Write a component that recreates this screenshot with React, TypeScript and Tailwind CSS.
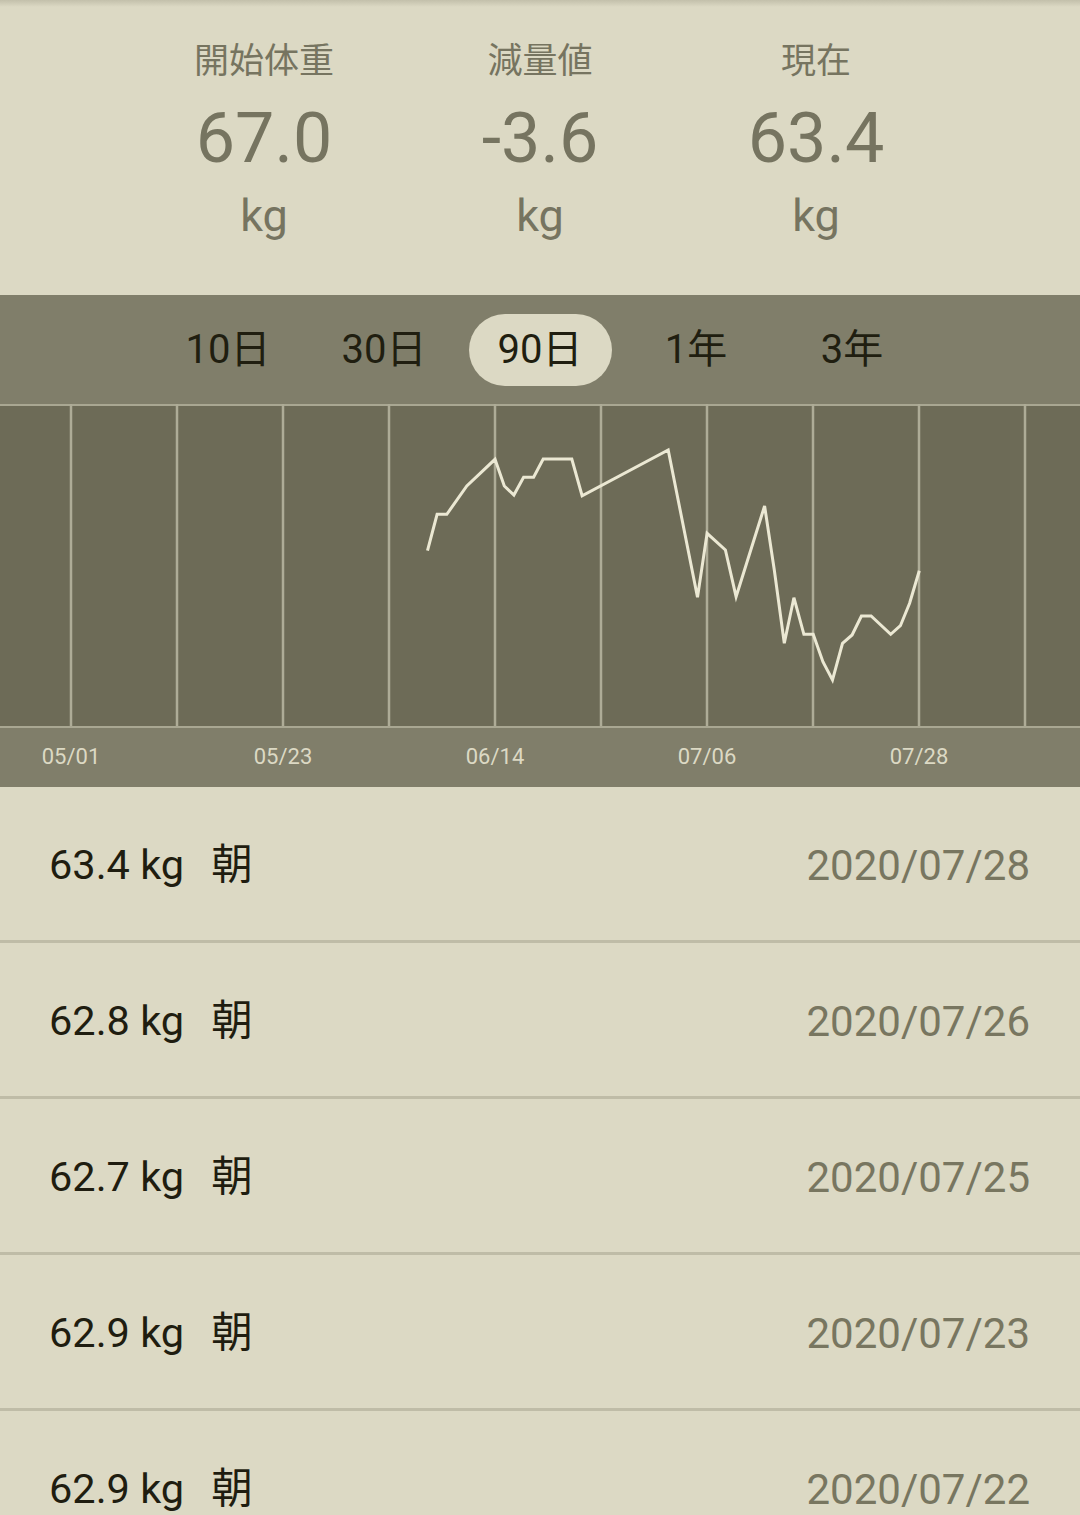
import React from 'react'

const FONT = { fontFamily: "Roboto, 'Noto Sans CJK JP', sans-serif" }

const stats = [
  { label: '開始体重', value: '67.0' },
  { label: '減量値', value: '-3.6' },
  { label: '現在', value: '63.4' },
]

const tabs = ['10日', '30日', '90日', '1年', '3年']

const axis = ['05/01', '', '05/23', '', '06/14', '', '07/06', '', '07/28', '']

const rows = [
  { w: '63.4', d: '2020/07/28' },
  { w: '62.8', d: '2020/07/26' },
  { w: '62.7', d: '2020/07/25' },
  { w: '62.9', d: '2020/07/23' },
  { w: '62.9', d: '2020/07/22' },
]

// chart points, page coords (y offset 404 removed below)
const pts: [number, number][] = [
  [427.5, 550.7], [437.1, 514.3], [446.8, 514.3], [466.8, 486], [495, 459.3],
  [504.3, 486], [513.9, 495], [523.6, 477.3], [533.6, 477.3], [543.2, 459],
  [571.8, 459], [582.1, 495.7], [668.2, 450], [697.5, 597.3], [707.1, 533.3],
  [725.4, 550], [736.1, 596.7], [764.6, 506], [774.3, 570], [784.3, 643.3],
  [793.9, 597.7], [803.9, 634.3], [813.2, 634.3], [822.9, 661.7], [832.5, 680],
  [842.5, 643.3], [852.1, 635], [861.4, 616], [871.1, 616], [890.7, 634.3],
  [900.4, 625.7], [909.6, 603.3], [919.3, 570.7],
]

const gridX = [71, 177, 283, 389, 495, 601, 707, 813, 919, 1025]

function Chart() {
  const line = pts.map(([x, y]) => `${x},${(y - 404).toFixed(1)}`).join(' ')
  return (
    <svg width="1080" height="324" viewBox="0 0 1080 324" className="block bg-[#6d6b57]">
      <line x1="0" y1="1" x2="1080" y2="1" stroke="#a9a792" strokeWidth="2" />
      {gridX.map((x) => (
        <line key={x} x1={x} y1="0" x2={x} y2="324" stroke="#aeac97" strokeWidth="2.5" />
      ))}
      <line x1="0" y1="323" x2="1080" y2="323" stroke="#a9a792" strokeWidth="2" />
      <polyline points={line} fill="none" stroke="#ebe8d3" strokeWidth="3" strokeLinejoin="miter" />
    </svg>
  )
}

export default function App() {
  return (
    <div className="h-[1515px] w-[1080px] overflow-hidden bg-[#dcd9c4]" style={FONT}>
      {/* summary header */}
      <header className="relative h-[295px] flex justify-center">
        <div className="absolute inset-x-0 top-0 h-[7px] bg-gradient-to-b from-[#c3c0ab] to-[#dcd9c4]" />
        {stats.map((s) => (
          <div key={s.label} className="w-[276px] flex flex-col items-center pt-[42px] text-[#767460]">
            <p className="text-[35px] leading-[40px]">{s.label}</p>
            <p className="mt-[16px] text-[70px] leading-[80px]">{s.value}</p>
            <p className="mt-[12px] text-[45px] leading-[52px]">kg</p>
          </div>
        ))}
      </header>

      {/* range tabs */}
      <div className="h-[109px] bg-[#807e6a] flex justify-center items-center">
        {tabs.map((t) => (
          <div key={t} className="w-[156px] flex justify-center">
            <div
              className={
                t === '90日'
                  ? 'w-[143px] h-[72px] rounded-full bg-[#dcd9c4] flex items-center justify-center text-[40px] text-[#201e10]'
                  : 'w-[143px] h-[72px] flex items-center justify-center text-[40px] text-[#201e10]'
              }
            >
              {t}
            </div>
          </div>
        ))}
      </div>

      {/* chart */}
      <Chart />
      <div className="h-[59px] bg-[#807e6a] flex items-center pl-[18px] pb-[3px]">
        {axis.map((a, i) => (
          <div key={i} className="w-[106px] text-center text-[22px] text-[#dcd9c4]">
            {a}
          </div>
        ))}
      </div>

      {/* history list */}
      <ul>
        {rows.map((r) => (
          <li
            key={r.d}
            className="h-[156px] pt-[4px] border-b-[3px] border-[#bfbca7] flex items-center justify-between pl-[49px] pr-[50px]"
          >
            <span className="text-[41.5px] text-[#1f1d10]">
              {r.w} kg<span className="ml-[27px]">朝</span>
            </span>
            <span className="text-[42px] text-[#787660]">{r.d}</span>
          </li>
        ))}
      </ul>
    </div>
  )
}
